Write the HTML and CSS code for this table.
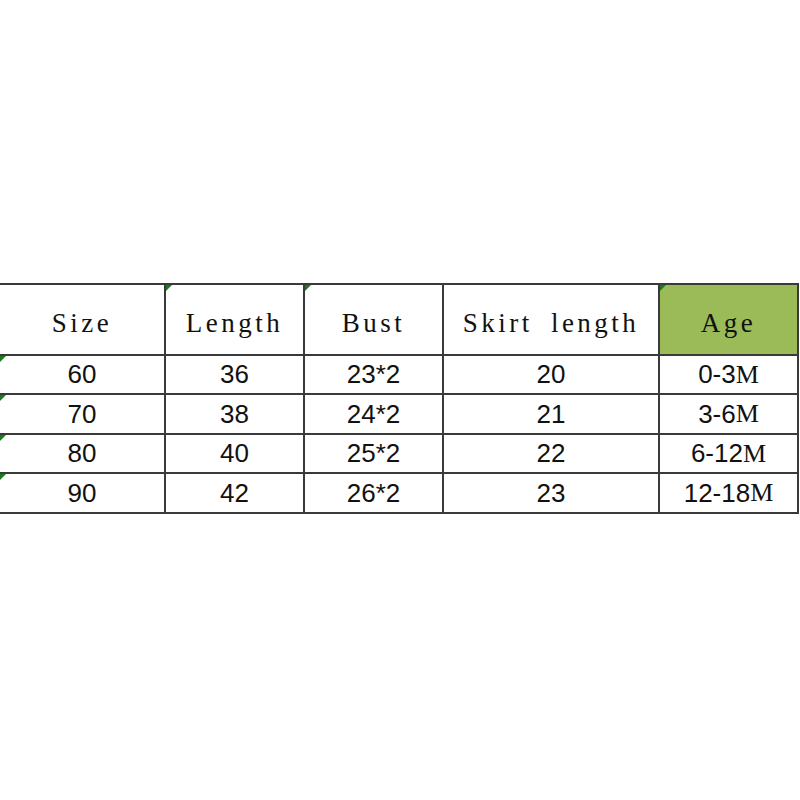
FILE: index.html
```html
<!DOCTYPE html>
<html>
<head>
<meta charset="utf-8">
<link rel="stylesheet" href="styles.css">
</head>
<body>
<div class="page">
  <div class="sheet">
    <div class="cell head">Size</div>
    <div class="cell head mark">Length</div>
    <div class="cell head mark">Bust</div>
    <div class="cell head">Skirt length</div>
    <div class="cell head age mark">Age</div>

    <div class="cell mark r1">60</div>
    <div class="cell r1">36</div>
    <div class="cell r1">23*2</div>
    <div class="cell r1">20</div>
    <div class="cell r1">0-3<span class="m">M</span></div>

    <div class="cell mark r2">70</div>
    <div class="cell r2">38</div>
    <div class="cell r2">24*2</div>
    <div class="cell r2">21</div>
    <div class="cell r2">3-6<span class="m">M</span></div>

    <div class="cell mark r1">80</div>
    <div class="cell r1">40</div>
    <div class="cell r1">25*2</div>
    <div class="cell r1">22</div>
    <div class="cell r1">6-12<span class="m">M</span></div>

    <div class="cell mark r2">90</div>
    <div class="cell r2">42</div>
    <div class="cell r2">26*2</div>
    <div class="cell r2">23</div>
    <div class="cell r2">12-18<span class="m">M</span></div>
  </div>
</div>
</body>
</html>
```

FILE: styles.css
```css
html, body {
  margin: 0;
  padding: 0;
  background: #ffffff;
}

.page {
  width: 800px;
  height: 800px;
  padding-top: 283px;
  box-sizing: border-box;
}

.sheet {
  display: grid;
  grid-template-columns: 166px 139px 139px 216px 139px;
  grid-template-rows: 71px 39px 40px 39px 40px;
  border-top: 2px solid #3a3a3a;
  width: 799px;
}

.cell {
  position: relative;
  border-right: 2px solid #3a3a3a;
  border-bottom: 2px solid #3a3a3a;
  display: flex;
  align-items: center;
  justify-content: center;
  font-family: "Liberation Sans", Arial, sans-serif;
  font-size: 26px;
  color: #111111;
  box-sizing: border-box;
}

.head {
  font-family: "Liberation Serif", "Times New Roman", serif;
  font-size: 27px;
  letter-spacing: 3.5px;
  word-spacing: 8px;
  padding-top: 8px;
  white-space: pre;
}

.age {
  background: #9bbb59;
}

.m {
  font-family: "Liberation Serif", "Times New Roman", serif;
  font-size: 26px;
}

.mark::before {
  content: "";
  position: absolute;
  left: 0;
  top: 0;
  width: 0;
  height: 0;
  border-top: 6px solid #1f7a1f;
  border-right: 6px solid transparent;
}
```
